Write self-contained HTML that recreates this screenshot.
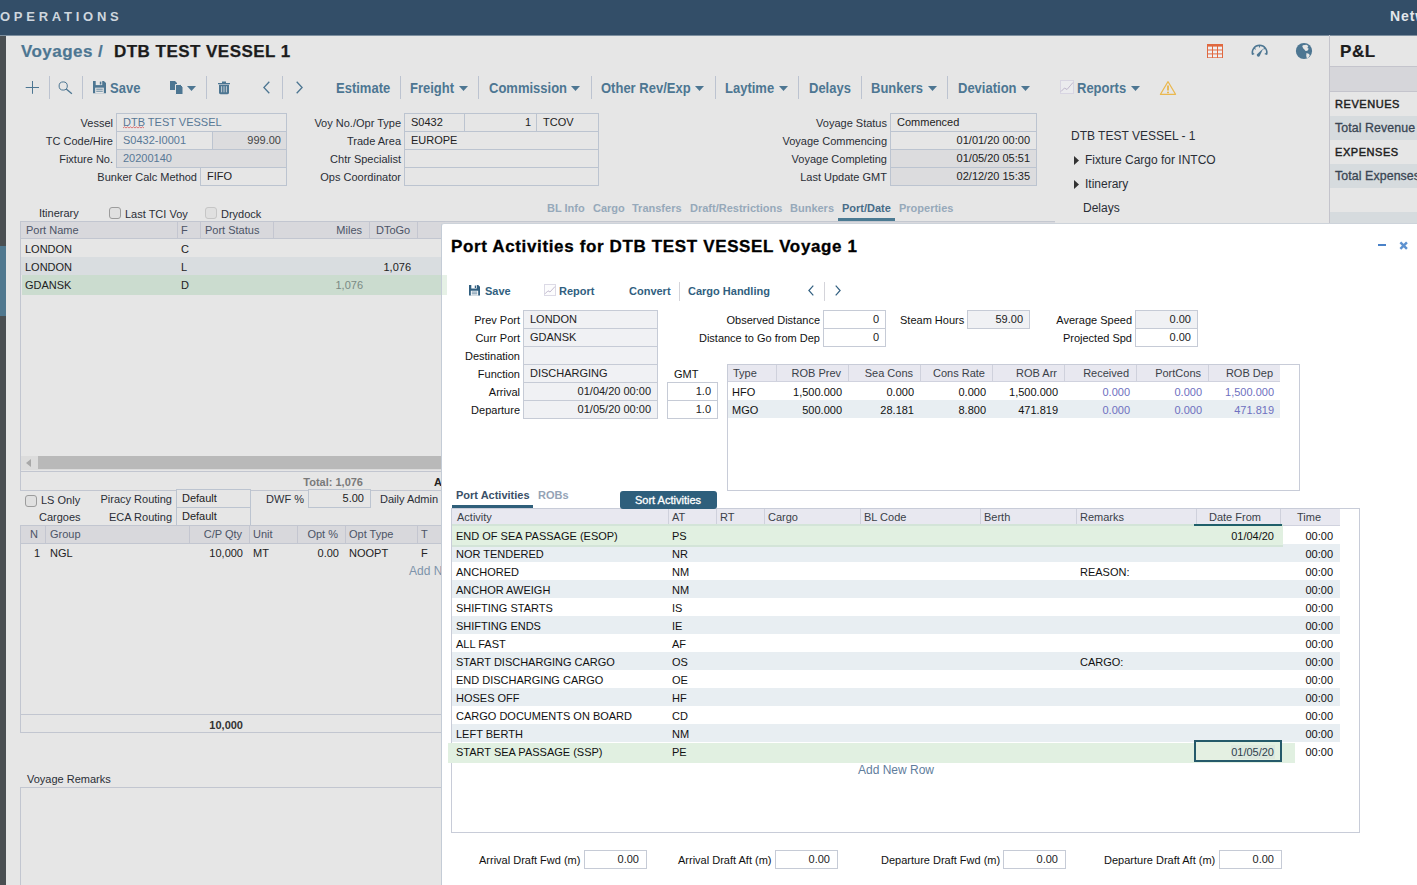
<!DOCTYPE html>
<html><head><meta charset="utf-8"><title>Operations - Voyages</title>
<style>
html,body{margin:0;padding:0;}
body{width:1417px;height:885px;overflow:hidden;position:relative;background:#e6e6e6;font-family:"Liberation Sans",Arial,sans-serif;font-size:12px;}
.a{position:absolute;box-sizing:border-box;}
.t{white-space:nowrap;}
svg{position:absolute;overflow:visible;}
</style></head><body>
<div class="a" style="left:0px;top:0px;width:1417px;height:36px;background:#334e68;"></div>
<div class="a" style="left:0px;top:35px;width:1417px;height:1px;background:#7d8f9f;"></div>
<div class="a t " style="top:9.0px;height:16px;line-height:16px;font-size:13px;color:#cfd6de;font-weight:bold;left:0px;letter-spacing:3.75px;">OPERATIONS</div>
<div class="a t " style="top:8.0px;height:16px;line-height:16px;font-size:14px;color:#e2e6ec;font-weight:bold;left:1390px;letter-spacing:0.9px;">Network</div>
<div class="a" style="left:0px;top:36px;width:6px;height:849px;background:#4a4f52;"></div>
<div class="a" style="left:0px;top:246px;width:6px;height:70px;background:#50788f;"></div>
<div class="a t " style="top:40.5px;height:22px;line-height:22px;font-size:17px;color:#4d7692;font-weight:bold;left:21px;letter-spacing:0.45px;-webkit-text-stroke:0.2px #4d7692;">Voyages /</div>
<div class="a t " style="top:40.5px;height:22px;line-height:22px;font-size:17px;color:#1c1c1c;font-weight:bold;left:114px;letter-spacing:0.47px;-webkit-text-stroke:0.25px #1c1c1c;">DTB TEST VESSEL 1</div>
<svg style="left:25px;top:81px" width="14" height="14" viewBox="0 0 14 14"><path d="M7.5 0V12.8M0.7 6.5H14" stroke="#4d7692" stroke-width="1" fill="none"/></svg>
<div class="a" style="left:49px;top:76px;width:1px;height:23px;background:#bcc3d0;"></div>
<svg style="left:58px;top:80px" width="15" height="15" viewBox="0 0 15 15"><circle cx="5.2" cy="6" r="4.1" stroke="#4d7692" stroke-width="1" fill="none"/><path d="M8.2 9L13.9 13.7" stroke="#4d7692" stroke-width="1.3"/></svg>
<div class="a" style="left:82px;top:76px;width:1px;height:23px;background:#bcc3d0;"></div>
<svg style="left:93px;top:81.2px" width="13" height="12.3" viewBox="0 0 12 12" preserveAspectRatio="none"><path d="M0 0H10L12 2V12H0Z" fill="#4d7692"/><rect x="2.5" y="0" width="6" height="4" fill="#e6e6e6"/><rect x="6.3" y="0.6" width="1.4" height="2.8" fill="#4d7692"/><rect x="2" y="6.5" width="8" height="5.5" fill="#e6e6e6"/><path d="M3 8H9M3 10H9" stroke="#4d7692" stroke-width="0.8"/></svg>
<div class="a t " style="top:80.0px;height:18px;line-height:18px;font-size:13px;color:#4d7692;font-weight:bold;left:110px;transform:scaleY(1.07);transform-origin:50% 55%;">Save</div>
<svg style="left:170px;top:81px" width="14" height="14" viewBox="0 0 14 14"><path d="M0 0H5L7 2V9H0Z" fill="#4d7692"/><path d="M5.5 3.5H10.5L13 6V13.5H5.5Z" fill="#4d7692" stroke="#e6e6e6" stroke-width="1"/></svg>
<svg style="left:187px;top:86px" width="9" height="5" viewBox="0 0 9 5"><polygon points="0,0 9,0 4.5,5" fill="#4d7692"/></svg>
<div class="a" style="left:206px;top:76px;width:1px;height:23px;background:#bcc3d0;"></div>
<svg style="left:218px;top:80.6px" width="12" height="13.2" viewBox="0 0 12 14" preserveAspectRatio="none"><path d="M0 2H12V3.4H0Z M4 0.6H8V2H4Z" fill="#4d7692"/><path d="M1 4H11V12.5Q11 14 9.5 14H2.5Q1 14 1 12.5Z" fill="#4d7692"/><path d="M3.6 5.5V12M6 5.5V12M8.4 5.5V12" stroke="#e6e6e6" stroke-width="0.8"/></svg>
<svg style="left:263px;top:81px" width="7" height="13" viewBox="0 0 7 13"><path d="M6.3 0.7L0.9 6.5L6.3 12.3" stroke="#4d7692" stroke-width="1.3" fill="none"/></svg>
<div class="a" style="left:282px;top:76px;width:1px;height:23px;background:#bcc3d0;"></div>
<svg style="left:296px;top:81px" width="7" height="13" viewBox="0 0 7 13"><path d="M0.7 0.7L6.1 6.5L0.7 12.3" stroke="#4d7692" stroke-width="1.3" fill="none"/></svg>
<div class="a t " style="top:80.0px;height:18px;line-height:18px;font-size:13px;color:#4d7692;font-weight:bold;left:336px;transform:scaleY(1.07);transform-origin:50% 55%;">Estimate</div>
<div class="a" style="left:400px;top:76px;width:1px;height:23px;background:#bcc3d0;"></div>
<div class="a t " style="top:80.0px;height:18px;line-height:18px;font-size:13px;color:#4d7692;font-weight:bold;left:410px;transform:scaleY(1.07);transform-origin:50% 55%;">Freight</div>
<svg style="left:459px;top:86px" width="9" height="5" viewBox="0 0 9 5"><polygon points="0,0 9,0 4.5,5" fill="#4d7692"/></svg>
<div class="a" style="left:478px;top:76px;width:1px;height:23px;background:#bcc3d0;"></div>
<div class="a t " style="top:80.0px;height:18px;line-height:18px;font-size:13px;color:#4d7692;font-weight:bold;left:489px;transform:scaleY(1.07);transform-origin:50% 55%;">Commission</div>
<svg style="left:571px;top:86px" width="9" height="5" viewBox="0 0 9 5"><polygon points="0,0 9,0 4.5,5" fill="#4d7692"/></svg>
<div class="a" style="left:591px;top:76px;width:1px;height:23px;background:#bcc3d0;"></div>
<div class="a t " style="top:80.0px;height:18px;line-height:18px;font-size:13px;color:#4d7692;font-weight:bold;left:601px;transform:scaleY(1.07);transform-origin:50% 55%;">Other Rev/Exp</div>
<svg style="left:695px;top:86px" width="9" height="5" viewBox="0 0 9 5"><polygon points="0,0 9,0 4.5,5" fill="#4d7692"/></svg>
<div class="a" style="left:715px;top:76px;width:1px;height:23px;background:#bcc3d0;"></div>
<div class="a t " style="top:80.0px;height:18px;line-height:18px;font-size:13px;color:#4d7692;font-weight:bold;left:725px;transform:scaleY(1.07);transform-origin:50% 55%;">Laytime</div>
<svg style="left:779px;top:86px" width="9" height="5" viewBox="0 0 9 5"><polygon points="0,0 9,0 4.5,5" fill="#4d7692"/></svg>
<div class="a" style="left:798px;top:76px;width:1px;height:23px;background:#bcc3d0;"></div>
<div class="a t " style="top:80.0px;height:18px;line-height:18px;font-size:13px;color:#4d7692;font-weight:bold;left:809px;transform:scaleY(1.07);transform-origin:50% 55%;">Delays</div>
<div class="a" style="left:861px;top:76px;width:1px;height:23px;background:#bcc3d0;"></div>
<div class="a t " style="top:80.0px;height:18px;line-height:18px;font-size:13px;color:#4d7692;font-weight:bold;left:871px;transform:scaleY(1.07);transform-origin:50% 55%;">Bunkers</div>
<svg style="left:928px;top:86px" width="9" height="5" viewBox="0 0 9 5"><polygon points="0,0 9,0 4.5,5" fill="#4d7692"/></svg>
<div class="a" style="left:947px;top:76px;width:1px;height:23px;background:#bcc3d0;"></div>
<div class="a t " style="top:80.0px;height:18px;line-height:18px;font-size:13px;color:#4d7692;font-weight:bold;left:958px;transform:scaleY(1.07);transform-origin:50% 55%;">Deviation</div>
<svg style="left:1021px;top:86px" width="9" height="5" viewBox="0 0 9 5"><polygon points="0,0 9,0 4.5,5" fill="#4d7692"/></svg>
<svg style="left:1060px;top:80px" width="14" height="14" viewBox="0 0 14 14"><rect x="0.5" y="0.5" width="13" height="13" fill="#ebebee" stroke="#d8d5e2" stroke-width="1"/><path d="M1 11.5L4.5 8L7 9.5L13 2.5" stroke="#bfb6cc" stroke-width="1" fill="none"/></svg>
<div class="a t " style="top:80.0px;height:18px;line-height:18px;font-size:13px;color:#4d7692;font-weight:bold;left:1077px;transform:scaleY(1.07);transform-origin:50% 55%;">Reports</div>
<svg style="left:1131px;top:86px" width="9" height="5" viewBox="0 0 9 5"><polygon points="0,0 9,0 4.5,5" fill="#4d7692"/></svg>
<svg style="left:1159px;top:80px" width="18" height="16" viewBox="0 0 18 16"><path d="M9 1.6L16.6 14.4H1.4Z" stroke="#eab84f" stroke-width="1.1" fill="none" stroke-linejoin="round"/><path d="M9 5.4V10.6" stroke="#e9ab2a" stroke-width="1.5"/><circle cx="9" cy="12.4" r="0.85" fill="#e9ab2a"/></svg>
<svg style="left:1207px;top:44px" width="16" height="14" viewBox="0 0 16 14"><rect x="0" y="0" width="16" height="14" fill="#e0683f"/><rect x="1" y="2.6" width="4" height="2.9" fill="#eef0f3"/><rect x="1" y="6.5" width="4" height="2.9" fill="#eef0f3"/><rect x="1" y="10.4" width="4" height="2.9" fill="#eef0f3"/><rect x="6" y="2.6" width="4" height="2.9" fill="#eef0f3"/><rect x="6" y="6.5" width="4" height="2.9" fill="#eef0f3"/><rect x="6" y="10.4" width="4" height="2.9" fill="#eef0f3"/><rect x="11" y="2.6" width="4" height="2.9" fill="#eef0f3"/><rect x="11" y="6.5" width="4" height="2.9" fill="#eef0f3"/><rect x="11" y="10.4" width="4" height="2.9" fill="#eef0f3"/></svg>
<svg style="left:1251px;top:44px" width="17" height="14" viewBox="0 0 17 14"><path d="M1.6 10.6A7.3 7.3 0 1 1 15.6 10.6" stroke="#4d7692" stroke-width="1.5" fill="none"/><path d="M1 10.2L3.2 9.6M15.9 10.2L13.8 9.6M3.2 4.2L4.6 5.4M8.5 1.5V3.4M13.8 4.2L12.6 5.4" stroke="#4d7692" stroke-width="1.1"/><path d="M12.2 4.6L8.6 12.2A1.7 1.7 0 0 1 5.8 10.6Z" fill="#4d7692"/></svg>
<svg style="left:1296px;top:43px" width="16" height="16" viewBox="0 0 16 16"><circle cx="8" cy="8" r="8.1" fill="#4d7692"/><path d="M6.8 2.2L10.5 1.7L12.3 3.1L11.4 4.9L12.8 5.8L11.4 7.7L9.6 8.1L8.6 6.8L7.3 5.4L6.3 3.6Z M10.5 10L13.2 10.9L13.7 12.7L12.3 14.6L10.9 15.5L10.2 12.7Z" fill="#e6e6e6"/></svg>
<div class="a t " style="top:115.0px;height:16px;line-height:16px;font-size:11px;color:#2a2e36;right:1304px;">Vessel</div>
<div class="a t " style="top:133.0px;height:16px;line-height:16px;font-size:11px;color:#2a2e36;right:1304px;">TC Code/Hire</div>
<div class="a t " style="top:151.0px;height:16px;line-height:16px;font-size:11px;color:#2a2e36;right:1304px;">Fixture No.</div>
<div class="a t " style="top:169.0px;height:16px;line-height:16px;font-size:11px;color:#2a2e36;right:1220px;">Bunker Calc Method</div>
<div class="a" style="left:116px;top:113px;width:171px;height:19px;background:#e7e7e7;border:1px solid #bcc4d0;"></div>
<div class="a t " style="top:113.5px;height:16px;line-height:16px;font-size:11px;color:#587896;left:123px;">DTB TEST VESSEL</div>
<svg style="left:122.5px;top:126px" width="22" height="3" viewBox="0 0 22 3"><path d="M0 2L1.5 0.8L3 2L4.5 0.8L6 2L7.5 0.8L9 2L10.5 0.8L12 2L13.5 0.8L15 2L16.5 0.8L18 2L19.5 0.8L21 2" stroke="#d85a5a" stroke-width="0.8" fill="none"/></svg>
<div class="a" style="left:116px;top:131px;width:97px;height:19px;background:#e6e6e6;border:1px solid #bcc4d0;"></div>
<div class="a t " style="top:131.5px;height:16px;line-height:16px;font-size:11px;color:#587896;left:123px;">S0432-I0001</div>
<div class="a" style="left:212px;top:131px;width:75px;height:19px;background:#dcdcde;border:1px solid #bcc4d0;"></div>
<div class="a t " style="top:131.5px;height:16px;line-height:16px;font-size:11px;color:#444;right:1136px;">999.00</div>
<div class="a" style="left:116px;top:149px;width:171px;height:19px;background:#dcdcde;border:1px solid #bcc4d0;"></div>
<div class="a t " style="top:149.5px;height:16px;line-height:16px;font-size:11px;color:#587896;left:123px;">20200140</div>
<div class="a" style="left:200px;top:167px;width:87px;height:19px;background:#e6e6e6;border:1px solid #bcc4d0;"></div>
<div class="a t " style="top:167.5px;height:16px;line-height:16px;font-size:11px;color:#222;left:207px;">FIFO</div>
<div class="a t " style="top:115.0px;height:16px;line-height:16px;font-size:11px;color:#2a2e36;right:1016px;">Voy No./Opr Type</div>
<div class="a t " style="top:133.0px;height:16px;line-height:16px;font-size:11px;color:#2a2e36;right:1016px;">Trade Area</div>
<div class="a t " style="top:151.0px;height:16px;line-height:16px;font-size:11px;color:#2a2e36;right:1016px;">Chtr Specialist</div>
<div class="a t " style="top:169.0px;height:16px;line-height:16px;font-size:11px;color:#2a2e36;right:1016px;">Ops Coordinator</div>
<div class="a" style="left:404px;top:113px;width:61px;height:19px;background:#e6e6e6;border:1px solid #bcc4d0;"></div>
<div class="a t " style="top:113.5px;height:16px;line-height:16px;font-size:11px;color:#222;left:411px;">S0432</div>
<div class="a" style="left:464px;top:113px;width:73px;height:19px;background:#e6e6e6;border:1px solid #bcc4d0;"></div>
<div class="a t " style="top:113.5px;height:16px;line-height:16px;font-size:11px;color:#222;right:886px;">1</div>
<div class="a" style="left:536px;top:113px;width:63px;height:19px;background:#e6e6e6;border:1px solid #bcc4d0;"></div>
<div class="a t " style="top:113.5px;height:16px;line-height:16px;font-size:11px;color:#222;left:543px;">TCOV</div>
<div class="a" style="left:404px;top:131px;width:195px;height:19px;background:#e6e6e6;border:1px solid #bcc4d0;"></div>
<div class="a t " style="top:131.5px;height:16px;line-height:16px;font-size:11px;color:#222;left:411px;">EUROPE</div>
<div class="a" style="left:404px;top:149px;width:195px;height:19px;background:#e6e6e6;border:1px solid #bcc4d0;"></div>
<div class="a" style="left:404px;top:167px;width:195px;height:19px;background:#e6e6e6;border:1px solid #bcc4d0;"></div>
<div class="a t " style="top:115.0px;height:16px;line-height:16px;font-size:11px;color:#2a2e36;right:530px;">Voyage Status</div>
<div class="a t " style="top:133.0px;height:16px;line-height:16px;font-size:11px;color:#2a2e36;right:530px;">Voyage Commencing</div>
<div class="a t " style="top:151.0px;height:16px;line-height:16px;font-size:11px;color:#2a2e36;right:530px;">Voyage Completing</div>
<div class="a t " style="top:169.0px;height:16px;line-height:16px;font-size:11px;color:#2a2e36;right:530px;">Last Update GMT</div>
<div class="a" style="left:890px;top:113px;width:147px;height:19px;background:#e6e6e6;border:1px solid #bcc4d0;"></div>
<div class="a t " style="top:113.5px;height:16px;line-height:16px;font-size:11px;color:#222;left:897px;">Commenced</div>
<div class="a" style="left:890px;top:131px;width:147px;height:19px;background:#e6e6e6;border:1px solid #bcc4d0;"></div>
<div class="a t " style="top:131.5px;height:16px;line-height:16px;font-size:11px;color:#222;right:387px;">01/01/20 00:00</div>
<div class="a" style="left:890px;top:149px;width:147px;height:19px;background:#dcdcde;border:1px solid #bcc4d0;"></div>
<div class="a t " style="top:149.5px;height:16px;line-height:16px;font-size:11px;color:#222;right:387px;">01/05/20 05:51</div>
<div class="a" style="left:890px;top:167px;width:147px;height:19px;background:#dcdcde;border:1px solid #bcc4d0;"></div>
<div class="a t " style="top:167.5px;height:16px;line-height:16px;font-size:11px;color:#222;right:387px;">02/12/20 15:35</div>
<div class="a t " style="top:128.0px;height:16px;line-height:16px;font-size:12px;color:#2a2e36;left:1071px;">DTB TEST VESSEL - 1</div>
<svg style="left:1074px;top:155.5px" width="5" height="9" viewBox="0 0 5 9"><polygon points="0,0 5,4.5 0,9" fill="#333"/></svg>
<div class="a t " style="top:152.0px;height:16px;line-height:16px;font-size:12px;color:#2a2e36;left:1085px;">Fixture Cargo for INTCO</div>
<svg style="left:1074px;top:179.5px" width="5" height="9" viewBox="0 0 5 9"><polygon points="0,0 5,4.5 0,9" fill="#333"/></svg>
<div class="a t " style="top:176.0px;height:16px;line-height:16px;font-size:12px;color:#2a2e36;left:1085px;">Itinerary</div>
<div class="a t " style="top:200.0px;height:16px;line-height:16px;font-size:12px;color:#2a2e36;left:1083px;">Delays</div>
<div class="a t " style="top:200.0px;height:16px;line-height:16px;font-size:11px;color:#96a9ba;font-weight:bold;left:547px;">BL Info</div>
<div class="a t " style="top:200.0px;height:16px;line-height:16px;font-size:11px;color:#96a9ba;font-weight:bold;left:593px;">Cargo</div>
<div class="a t " style="top:200.0px;height:16px;line-height:16px;font-size:11px;color:#96a9ba;font-weight:bold;left:632px;">Transfers</div>
<div class="a t " style="top:200.0px;height:16px;line-height:16px;font-size:11px;color:#96a9ba;font-weight:bold;left:690px;">Draft/Restrictions</div>
<div class="a t " style="top:200.0px;height:16px;line-height:16px;font-size:11px;color:#96a9ba;font-weight:bold;left:790px;">Bunkers</div>
<div class="a t " style="top:200.0px;height:16px;line-height:16px;font-size:11px;color:#96a9ba;font-weight:bold;left:899px;">Properties</div>
<div class="a t " style="top:200.0px;height:16px;line-height:16px;font-size:11px;color:#486c88;font-weight:bold;left:842px;">Port/Date</div>
<div class="a" style="left:838px;top:218px;width:57px;height:3px;background:#4b7a92;"></div>
<div class="a" style="left:441px;top:221px;width:614px;height:1px;background:#c4c8d0;"></div>
<div class="a" style="left:441px;top:222px;width:614px;height:2px;background:#d9d9de;"></div>
<div class="a" style="left:1329px;top:35px;width:1px;height:189px;background:#c4c4cc;"></div>
<div class="a t " style="top:41.0px;height:22px;line-height:22px;font-size:17px;color:#1c1c1c;font-weight:bold;left:1340px;letter-spacing:0.6px;-webkit-text-stroke:0.2px #1c1c1c;">P&amp;L</div>
<div class="a" style="left:1330px;top:66px;width:87px;height:26px;background:#d6d6da;border-top:1px solid #c4c4cc;border-bottom:1px solid #c4c4cc;"></div>
<div class="a t " style="top:96.0px;height:16px;line-height:16px;font-size:11px;color:#1e1e1e;left:1335px;letter-spacing:0.55px;-webkit-text-stroke:0.45px #1e1e1e;">REVENUES</div>
<div class="a" style="left:1330px;top:116px;width:87px;height:24px;background:#d6dbde;"></div>
<div class="a t " style="top:120.0px;height:16px;line-height:16px;font-size:12.35px;color:#3a4654;left:1335px;letter-spacing:0.1px;-webkit-text-stroke:0.3px #3a4654;">Total Revenue</div>
<div class="a t " style="top:144.0px;height:16px;line-height:16px;font-size:11px;color:#1e1e1e;left:1335px;letter-spacing:0.55px;-webkit-text-stroke:0.45px #1e1e1e;">EXPENSES</div>
<div class="a" style="left:1330px;top:164px;width:87px;height:24px;background:#d6dbde;"></div>
<div class="a t " style="top:168.0px;height:16px;line-height:16px;font-size:12.35px;color:#3a4654;left:1335px;letter-spacing:0.1px;-webkit-text-stroke:0.3px #3a4654;">Total Expenses</div>
<div class="a" style="left:1330px;top:212px;width:87px;height:12px;background:#d6dbde;"></div>
<div class="a t " style="top:205.0px;height:16px;line-height:16px;font-size:11px;color:#2a2e36;left:39px;">Itinerary</div>
<div class="a" style="left:109px;top:207px;width:12px;height:12px;background:#e0e0e0;border:1.2px solid #9c9c9c;border-radius:3px;"></div>
<div class="a t " style="top:206.0px;height:16px;line-height:16px;font-size:11px;color:#2a2e36;left:125px;">Last TCI Voy</div>
<div class="a" style="left:205px;top:207px;width:12px;height:12px;background:#e0e0e0;border:1.2px solid #c6c6c6;border-radius:3px;"></div>
<div class="a t " style="top:206.0px;height:16px;line-height:16px;font-size:11px;color:#2a2e36;left:221px;">Drydock</div>
<div class="a" style="left:20px;top:221px;width:425px;height:270px;border:1px solid #c2c6d0;"></div>
<div class="a" style="left:21px;top:222px;width:424px;height:17px;background:#d8d8dc;border-bottom:1px solid #c2c6d0;"></div>
<div class="a t " style="top:222.0px;height:16px;line-height:16px;font-size:11px;color:#4c5466;left:26px;">Port Name</div>
<div class="a t " style="top:222.0px;height:16px;line-height:16px;font-size:11px;color:#4c5466;left:181px;">F</div>
<div class="a t " style="top:222.0px;height:16px;line-height:16px;font-size:11px;color:#4c5466;left:205px;">Port Status</div>
<div class="a t " style="top:222.0px;height:16px;line-height:16px;font-size:11px;color:#4c5466;left:376px;">DToGo</div>
<div class="a t " style="top:222.0px;height:16px;line-height:16px;font-size:11px;color:#4c5466;right:1055px;">Miles</div>
<div class="a" style="left:177px;top:222px;width:1px;height:16px;background:#c4c6d0;"></div>
<div class="a" style="left:200px;top:222px;width:1px;height:16px;background:#c4c6d0;"></div>
<div class="a" style="left:273px;top:222px;width:1px;height:16px;background:#c4c6d0;"></div>
<div class="a" style="left:369px;top:222px;width:1px;height:16px;background:#c4c6d0;"></div>
<div class="a" style="left:417px;top:222px;width:1px;height:16px;background:#c4c6d0;"></div>
<div class="a" style="left:21px;top:257px;width:424px;height:18px;background:#d9dde0;"></div>
<div class="a" style="left:22px;top:275px;width:425px;height:20px;background:#cbdccf;"></div>
<div class="a t " style="top:241.0px;height:16px;line-height:16px;font-size:11px;color:#222;left:25px;">LONDON</div>
<div class="a t " style="top:241.0px;height:16px;line-height:16px;font-size:11px;color:#222;left:181px;">C</div>
<div class="a t " style="top:259.0px;height:16px;line-height:16px;font-size:11px;color:#222;left:25px;">LONDON</div>
<div class="a t " style="top:259.0px;height:16px;line-height:16px;font-size:11px;color:#222;left:181px;">L</div>
<div class="a t " style="top:277.0px;height:16px;line-height:16px;font-size:11px;color:#222;left:25px;">GDANSK</div>
<div class="a t " style="top:277.0px;height:16px;line-height:16px;font-size:11px;color:#222;left:181px;">D</div>
<div class="a t " style="top:259.0px;height:16px;line-height:16px;font-size:11px;color:#222;right:1006px;">1,076</div>
<div class="a t " style="top:277.0px;height:16px;line-height:16px;font-size:11px;color:#7a8a84;right:1054px;">1,076</div>
<div class="a" style="left:21px;top:456px;width:424px;height:14px;background:#dcdcdc;"></div>
<div class="a" style="left:38px;top:456px;width:407px;height:13px;background:#b9b9b9;"></div>
<svg style="left:26px;top:458.5px" width="5" height="8" viewBox="0 0 5 8"><polygon points="5,0 0,4 5,8" fill="#a8a8a8"/></svg>
<div class="a" style="left:21px;top:471px;width:424px;height:1px;background:#c2c6d0;"></div>
<div class="a t " style="top:474.0px;height:16px;line-height:16px;font-size:11px;color:#7a7a7a;font-weight:bold;right:1054px;">Total: 1,076</div>
<div class="a t " style="top:474.0px;height:16px;line-height:16px;font-size:11px;color:#222;font-weight:bold;left:434px;">A</div>
<div class="a" style="left:25px;top:494.5px;width:12px;height:12px;background:#e0e0e0;border:1.2px solid #9c9c9c;border-radius:3px;"></div>
<div class="a t " style="top:492.0px;height:16px;line-height:16px;font-size:11px;color:#2a2e36;left:41px;">LS Only</div>
<div class="a t " style="top:491.0px;height:16px;line-height:16px;font-size:11px;color:#2a2e36;right:1245px;">Piracy Routing</div>
<div class="a" style="left:176px;top:489px;width:75px;height:19px;background:#e6e6e6;border:1px solid #bcc4d0;"></div>
<div class="a t " style="top:489.5px;height:16px;line-height:16px;font-size:11px;color:#222;left:182px;">Default</div>
<div class="a t " style="top:491.0px;height:16px;line-height:16px;font-size:11px;color:#2a2e36;right:1113px;">DWF %</div>
<div class="a" style="left:308px;top:489px;width:63px;height:19px;background:#e6e6e6;border:1px solid #bcc4d0;"></div>
<div class="a t " style="top:489.5px;height:16px;line-height:16px;font-size:11px;color:#222;right:1053px;">5.00</div>
<div class="a t " style="top:491.0px;height:16px;line-height:16px;font-size:11px;color:#2a2e36;left:380px;">Daily Admin</div>
<div class="a t " style="top:509.0px;height:16px;line-height:16px;font-size:11px;color:#2a2e36;left:39px;">Cargoes</div>
<div class="a t " style="top:509.0px;height:16px;line-height:16px;font-size:11px;color:#2a2e36;right:1245px;">ECA Routing</div>
<div class="a" style="left:176px;top:507px;width:75px;height:19px;background:#e6e6e6;border:1px solid #bcc4d0;"></div>
<div class="a t " style="top:507.5px;height:16px;line-height:16px;font-size:11px;color:#222;left:182px;">Default</div>
<div class="a" style="left:20px;top:525px;width:425px;height:208px;border:1px solid #c2c6d0;"></div>
<div class="a" style="left:21px;top:526px;width:424px;height:18px;background:#d8d8dc;border-bottom:1px solid #c2c6d0;"></div>
<div class="a t " style="top:526.0px;height:16px;line-height:16px;font-size:11px;color:#4c5466;left:30px;">N</div>
<div class="a t " style="top:526.0px;height:16px;line-height:16px;font-size:11px;color:#4c5466;left:50px;">Group</div>
<div class="a t " style="top:526.0px;height:16px;line-height:16px;font-size:11px;color:#4c5466;left:253px;">Unit</div>
<div class="a t " style="top:526.0px;height:16px;line-height:16px;font-size:11px;color:#4c5466;left:349px;">Opt Type</div>
<div class="a t " style="top:526.0px;height:16px;line-height:16px;font-size:11px;color:#4c5466;left:421px;">T</div>
<div class="a t " style="top:526.0px;height:16px;line-height:16px;font-size:11px;color:#4c5466;right:1175px;">C/P Qty</div>
<div class="a t " style="top:526.0px;height:16px;line-height:16px;font-size:11px;color:#4c5466;right:1079px;">Opt %</div>
<div class="a" style="left:45px;top:526px;width:1px;height:17px;background:#c4c6d0;"></div>
<div class="a" style="left:189px;top:526px;width:1px;height:17px;background:#c4c6d0;"></div>
<div class="a" style="left:249px;top:526px;width:1px;height:17px;background:#c4c6d0;"></div>
<div class="a" style="left:297px;top:526px;width:1px;height:17px;background:#c4c6d0;"></div>
<div class="a" style="left:345px;top:526px;width:1px;height:17px;background:#c4c6d0;"></div>
<div class="a" style="left:417px;top:526px;width:1px;height:17px;background:#c4c6d0;"></div>
<div class="a t " style="top:545.0px;height:16px;line-height:16px;font-size:11px;color:#222;right:1377px;">1</div>
<div class="a t " style="top:545.0px;height:16px;line-height:16px;font-size:11px;color:#222;left:50px;">NGL</div>
<div class="a t " style="top:545.0px;height:16px;line-height:16px;font-size:11px;color:#222;right:1174px;">10,000</div>
<div class="a t " style="top:545.0px;height:16px;line-height:16px;font-size:11px;color:#222;left:253px;">MT</div>
<div class="a t " style="top:545.0px;height:16px;line-height:16px;font-size:11px;color:#222;right:1078px;">0.00</div>
<div class="a t " style="top:545.0px;height:16px;line-height:16px;font-size:11px;color:#222;left:349px;">NOOPT</div>
<div class="a t " style="top:545.0px;height:16px;line-height:16px;font-size:11px;color:#222;left:421px;">F</div>
<div class="a t " style="top:563.0px;height:16px;line-height:16px;font-size:12px;color:#7d93aa;left:409px;">Add N</div>
<div class="a" style="left:21px;top:714px;width:424px;height:1px;background:#c2c6d0;"></div>
<div class="a t " style="top:717.0px;height:16px;line-height:16px;font-size:11px;color:#333;font-weight:bold;right:1174px;">10,000</div>
<div class="a t " style="top:771.0px;height:16px;line-height:16px;font-size:11px;color:#2a2e36;left:27px;">Voyage Remarks</div>
<div class="a" style="left:20px;top:787px;width:425px;height:110px;border:1px solid #c2c6d0;"></div>
<div class="a" style="left:441px;top:223px;width:976px;height:662px;background:#ffffff;border-left:1px solid #c4ccd6;border-top:1px solid #cdd3da;border-top-left-radius:3px;"></div>
<div class="a" style="left:442px;top:275px;width:5px;height:20px;background:#e6f1e6;"></div>
<div class="a t " style="top:236.0px;height:22px;line-height:22px;font-size:17px;color:#000;font-weight:bold;left:451px;letter-spacing:0.64px;-webkit-text-stroke:0.3px #000;">Port Activities for DTB TEST VESSEL Voyage 1</div>
<div class="a" style="left:1378px;top:244px;width:8px;height:2px;background:#4a82c8;"></div>
<svg style="left:1398.8px;top:240.9px" width="9.3" height="9.1" viewBox="0 0 10 10"><path d="M1.4 1.4L8.6 8.6M8.6 1.4L1.4 8.6" stroke="#5e92d0" stroke-width="2.7"/></svg>
<svg style="left:469px;top:285.2px" width="11" height="10.6" viewBox="0 0 12 12" preserveAspectRatio="none"><path d="M0 0H10L12 2V12H0Z" fill="#315f80"/><rect x="2.5" y="0" width="6" height="4" fill="#fff"/><rect x="6.3" y="0.6" width="1.4" height="2.8" fill="#315f80"/><rect x="2" y="6.5" width="8" height="5.5" fill="#fff"/><path d="M3 8H9M3 10H9" stroke="#315f80" stroke-width="0.8"/></svg>
<div class="a t " style="top:283.0px;height:16px;line-height:16px;font-size:11px;color:#315f80;font-weight:bold;left:485px;">Save</div>
<svg style="left:544px;top:284px" width="12" height="12" viewBox="0 0 12 12"><rect x="0.5" y="0.5" width="11" height="11" fill="#fcfcfd" stroke="#dcdae6" stroke-width="1"/><path d="M1 9.8L4 6.8L6 8L11 2.5" stroke="#c4bccf" stroke-width="1" fill="none"/></svg>
<div class="a t " style="top:283.0px;height:16px;line-height:16px;font-size:11px;color:#315f80;font-weight:bold;left:559px;">Report</div>
<div class="a t " style="top:283.0px;height:16px;line-height:16px;font-size:11px;color:#315f80;font-weight:bold;left:629px;">Convert</div>
<div class="a" style="left:679px;top:282px;width:1px;height:19px;background:#d4d4da;"></div>
<div class="a t " style="top:283.0px;height:16px;line-height:16px;font-size:11px;color:#315f80;font-weight:bold;left:688px;">Cargo Handling</div>
<svg style="left:808px;top:285px" width="6" height="11" viewBox="0 0 6 11"><path d="M5.3 0.7L0.9 5.5L5.3 10.3" stroke="#315f80" stroke-width="1.2" fill="none"/></svg>
<div class="a" style="left:824px;top:282px;width:1px;height:19px;background:#d4d4da;"></div>
<svg style="left:835px;top:285px" width="6" height="11" viewBox="0 0 6 11"><path d="M0.7 0.7L5.1 5.5L0.7 10.3" stroke="#315f80" stroke-width="1.2" fill="none"/></svg>
<div class="a t " style="top:312.0px;height:16px;line-height:16px;font-size:11px;color:#111;right:897px;">Prev Port</div>
<div class="a t " style="top:330.0px;height:16px;line-height:16px;font-size:11px;color:#111;right:897px;">Curr Port</div>
<div class="a t " style="top:348.0px;height:16px;line-height:16px;font-size:11px;color:#111;right:897px;">Destination</div>
<div class="a t " style="top:366.0px;height:16px;line-height:16px;font-size:11px;color:#111;right:897px;">Function</div>
<div class="a t " style="top:384.0px;height:16px;line-height:16px;font-size:11px;color:#111;right:897px;">Arrival</div>
<div class="a t " style="top:402.0px;height:16px;line-height:16px;font-size:11px;color:#111;right:897px;">Departure</div>
<div class="a" style="left:523px;top:310px;width:135px;height:19px;background:#f0f1f4;border:1px solid #c6cbd6;"></div>
<div class="a t " style="top:310.5px;height:16px;line-height:16px;font-size:11px;color:#222;left:530px;">LONDON</div>
<div class="a" style="left:523px;top:328px;width:135px;height:19px;background:#f0f1f4;border:1px solid #c6cbd6;"></div>
<div class="a t " style="top:328.5px;height:16px;line-height:16px;font-size:11px;color:#222;left:530px;">GDANSK</div>
<div class="a" style="left:523px;top:346px;width:135px;height:19px;background:#f0f1f4;border:1px solid #c6cbd6;"></div>
<div class="a" style="left:523px;top:364px;width:135px;height:19px;background:#f0f1f4;border:1px solid #c6cbd6;"></div>
<div class="a t " style="top:364.5px;height:16px;line-height:16px;font-size:11px;color:#222;left:530px;">DISCHARGING</div>
<div class="a" style="left:523px;top:382px;width:135px;height:19px;background:#f0f1f4;border:1px solid #c6cbd6;"></div>
<div class="a t " style="top:382.5px;height:16px;line-height:16px;font-size:11px;color:#222;right:766px;">01/04/20 00:00</div>
<div class="a" style="left:523px;top:400px;width:135px;height:19px;background:#f0f1f4;border:1px solid #c6cbd6;"></div>
<div class="a t " style="top:400.5px;height:16px;line-height:16px;font-size:11px;color:#222;right:766px;">01/05/20 00:00</div>
<div class="a t " style="top:312.0px;height:16px;line-height:16px;font-size:11px;color:#111;right:597px;">Observed Distance</div>
<div class="a t " style="top:330.0px;height:16px;line-height:16px;font-size:11px;color:#111;right:597px;">Distance to Go from Dep</div>
<div class="a" style="left:823px;top:310px;width:63px;height:19px;background:#fff;border:1px solid #c6cbd6;"></div>
<div class="a t " style="top:310.5px;height:16px;line-height:16px;font-size:11px;color:#222;right:538px;">0</div>
<div class="a" style="left:823px;top:328px;width:63px;height:19px;background:#fff;border:1px solid #c6cbd6;"></div>
<div class="a t " style="top:328.5px;height:16px;line-height:16px;font-size:11px;color:#222;right:538px;">0</div>
<div class="a t " style="top:312.0px;height:16px;line-height:16px;font-size:11px;color:#111;left:900px;">Steam Hours</div>
<div class="a" style="left:967px;top:310px;width:63px;height:19px;background:#f0f1f4;border:1px solid #c6cbd6;"></div>
<div class="a t " style="top:310.5px;height:16px;line-height:16px;font-size:11px;color:#222;right:394px;">59.00</div>
<div class="a t " style="top:312.0px;height:16px;line-height:16px;font-size:11px;color:#111;right:285px;">Average Speed</div>
<div class="a t " style="top:330.0px;height:16px;line-height:16px;font-size:11px;color:#111;right:285px;">Projected Spd</div>
<div class="a" style="left:1135px;top:310px;width:63px;height:19px;background:#f0f1f4;border:1px solid #c6cbd6;"></div>
<div class="a t " style="top:310.5px;height:16px;line-height:16px;font-size:11px;color:#222;right:226px;">0.00</div>
<div class="a" style="left:1135px;top:328px;width:63px;height:19px;background:#fff;border:1px solid #c6cbd6;"></div>
<div class="a t " style="top:328.5px;height:16px;line-height:16px;font-size:11px;color:#222;right:226px;">0.00</div>
<div class="a t " style="top:366.0px;height:16px;line-height:16px;font-size:11px;color:#111;left:674px;">GMT</div>
<div class="a" style="left:667px;top:382px;width:51px;height:19px;background:#fff;border:1px solid #c6cbd6;"></div>
<div class="a t " style="top:382.5px;height:16px;line-height:16px;font-size:11px;color:#222;right:706px;">1.0</div>
<div class="a" style="left:667px;top:400px;width:51px;height:19px;background:#fff;border:1px solid #c6cbd6;"></div>
<div class="a t " style="top:400.5px;height:16px;line-height:16px;font-size:11px;color:#222;right:706px;">1.0</div>
<div class="a" style="left:727px;top:364px;width:573px;height:127px;background:#fff;border:1px solid #c8ccd8;"></div>
<div class="a" style="left:728px;top:365px;width:552px;height:17px;background:#e8e8f0;border-bottom:1px solid #d0d2de;"></div>
<div class="a t " style="top:365.0px;height:16px;line-height:16px;font-size:11px;color:#3a3f48;left:733px;">Type</div>
<div class="a t " style="top:365.0px;height:16px;line-height:16px;font-size:11px;color:#3a3f48;right:576px;">ROB Prev</div>
<div class="a t " style="top:365.0px;height:16px;line-height:16px;font-size:11px;color:#3a3f48;right:504px;">Sea Cons</div>
<div class="a t " style="top:365.0px;height:16px;line-height:16px;font-size:11px;color:#3a3f48;right:432px;">Cons Rate</div>
<div class="a t " style="top:365.0px;height:16px;line-height:16px;font-size:11px;color:#3a3f48;right:360px;">ROB Arr</div>
<div class="a t " style="top:365.0px;height:16px;line-height:16px;font-size:11px;color:#3a3f48;right:288px;">Received</div>
<div class="a t " style="top:365.0px;height:16px;line-height:16px;font-size:11px;color:#3a3f48;right:216px;">PortCons</div>
<div class="a t " style="top:365.0px;height:16px;line-height:16px;font-size:11px;color:#3a3f48;right:144px;">ROB Dep</div>
<div class="a" style="left:776px;top:365px;width:1px;height:16px;background:#cfd1dc;"></div>
<div class="a" style="left:848px;top:365px;width:1px;height:16px;background:#cfd1dc;"></div>
<div class="a" style="left:920px;top:365px;width:1px;height:16px;background:#cfd1dc;"></div>
<div class="a" style="left:992px;top:365px;width:1px;height:16px;background:#cfd1dc;"></div>
<div class="a" style="left:1064px;top:365px;width:1px;height:16px;background:#cfd1dc;"></div>
<div class="a" style="left:1136px;top:365px;width:1px;height:16px;background:#cfd1dc;"></div>
<div class="a" style="left:1208px;top:365px;width:1px;height:16px;background:#cfd1dc;"></div>
<div class="a" style="left:728px;top:400px;width:552px;height:18px;background:#e8eef2;"></div>
<div class="a t " style="top:384.0px;height:16px;line-height:16px;font-size:11px;color:#111;left:732px;">HFO</div>
<div class="a t " style="top:402.0px;height:16px;line-height:16px;font-size:11px;color:#111;left:732px;">MGO</div>
<div class="a t " style="top:384.0px;height:16px;line-height:16px;font-size:11px;color:#111;right:575px;">1,500.000</div>
<div class="a t " style="top:402.0px;height:16px;line-height:16px;font-size:11px;color:#111;right:575px;">500.000</div>
<div class="a t " style="top:384.0px;height:16px;line-height:16px;font-size:11px;color:#111;right:503px;">0.000</div>
<div class="a t " style="top:402.0px;height:16px;line-height:16px;font-size:11px;color:#111;right:503px;">28.181</div>
<div class="a t " style="top:384.0px;height:16px;line-height:16px;font-size:11px;color:#111;right:431px;">0.000</div>
<div class="a t " style="top:402.0px;height:16px;line-height:16px;font-size:11px;color:#111;right:431px;">8.800</div>
<div class="a t " style="top:384.0px;height:16px;line-height:16px;font-size:11px;color:#111;right:359px;">1,500.000</div>
<div class="a t " style="top:402.0px;height:16px;line-height:16px;font-size:11px;color:#111;right:359px;">471.819</div>
<div class="a t " style="top:384.0px;height:16px;line-height:16px;font-size:11px;color:#6e70c0;right:287px;">0.000</div>
<div class="a t " style="top:402.0px;height:16px;line-height:16px;font-size:11px;color:#6e70c0;right:287px;">0.000</div>
<div class="a t " style="top:384.0px;height:16px;line-height:16px;font-size:11px;color:#6e70c0;right:215px;">0.000</div>
<div class="a t " style="top:402.0px;height:16px;line-height:16px;font-size:11px;color:#6e70c0;right:215px;">0.000</div>
<div class="a t " style="top:384.0px;height:16px;line-height:16px;font-size:11px;color:#6e70c0;right:143px;">1,500.000</div>
<div class="a t " style="top:402.0px;height:16px;line-height:16px;font-size:11px;color:#6e70c0;right:143px;">471.819</div>
<div class="a t " style="top:487.0px;height:16px;line-height:16px;font-size:11px;color:#3a5068;font-weight:bold;left:456px;">Port Activities</div>
<div class="a" style="left:452px;top:505px;width:81px;height:3px;background:#2f5f7a;"></div>
<div class="a t " style="top:487.0px;height:16px;line-height:16px;font-size:11px;color:#94a3b6;font-weight:bold;left:538px;">ROBs</div>
<div class="a" style="left:451px;top:508px;width:909px;height:325px;background:#fff;border:1px solid #c8ccd8;"></div>
<div class="a" style="left:452px;top:509px;width:888px;height:17px;background:#e8e8f0;border-bottom:1px solid #d0d2de;"></div>
<div class="a" style="left:620px;top:491px;width:97px;height:18px;background:#2e5f7c;border-radius:3px;"></div>
<div class="a t " style="top:492.0px;height:16px;line-height:16px;font-size:11px;color:#fff;left:635px;-webkit-text-stroke:0.3px #fff;">Sort Activities</div>
<div class="a t " style="top:509.0px;height:16px;line-height:16px;font-size:11px;color:#3a3f48;left:457px;">Activity</div>
<div class="a t " style="top:509.0px;height:16px;line-height:16px;font-size:11px;color:#3a3f48;left:672px;">AT</div>
<div class="a t " style="top:509.0px;height:16px;line-height:16px;font-size:11px;color:#3a3f48;left:720px;">RT</div>
<div class="a t " style="top:509.0px;height:16px;line-height:16px;font-size:11px;color:#3a3f48;left:768px;">Cargo</div>
<div class="a t " style="top:509.0px;height:16px;line-height:16px;font-size:11px;color:#3a3f48;left:864px;">BL Code</div>
<div class="a t " style="top:509.0px;height:16px;line-height:16px;font-size:11px;color:#3a3f48;left:984px;">Berth</div>
<div class="a t " style="top:509.0px;height:16px;line-height:16px;font-size:11px;color:#3a3f48;left:1080px;">Remarks</div>
<div class="a t " style="top:509.0px;height:16px;line-height:16px;font-size:11px;color:#3a3f48;left:1209px;">Date From</div>
<div class="a t " style="top:509.0px;height:16px;line-height:16px;font-size:11px;color:#3a3f48;left:1297px;">Time</div>
<div class="a" style="left:668px;top:509px;width:1px;height:16px;background:#cfd1dc;"></div>
<div class="a" style="left:716px;top:509px;width:1px;height:16px;background:#cfd1dc;"></div>
<div class="a" style="left:764px;top:509px;width:1px;height:16px;background:#cfd1dc;"></div>
<div class="a" style="left:860px;top:509px;width:1px;height:16px;background:#cfd1dc;"></div>
<div class="a" style="left:980px;top:509px;width:1px;height:16px;background:#cfd1dc;"></div>
<div class="a" style="left:1076px;top:509px;width:1px;height:16px;background:#cfd1dc;"></div>
<div class="a" style="left:1196px;top:509px;width:1px;height:16px;background:#cfd1dc;"></div>
<div class="a" style="left:1280px;top:509px;width:1px;height:16px;background:#cfd1dc;"></div>
<div class="a" style="left:452px;top:544px;width:888px;height:18px;background:#e8eef2;"></div>
<div class="a" style="left:452px;top:580px;width:888px;height:18px;background:#e8eef2;"></div>
<div class="a" style="left:452px;top:616px;width:888px;height:18px;background:#e8eef2;"></div>
<div class="a" style="left:452px;top:652px;width:888px;height:18px;background:#e8eef2;"></div>
<div class="a" style="left:452px;top:688px;width:888px;height:18px;background:#e8eef2;"></div>
<div class="a" style="left:452px;top:724px;width:888px;height:18px;background:#e8eef2;"></div>
<div class="a" style="left:452px;top:524px;width:831px;height:23px;background:#d3e4d8;"></div>
<div class="a" style="left:452px;top:526px;width:831px;height:19px;background:#e1f0e1;"></div>
<div class="a" style="left:448px;top:743px;width:847px;height:20px;background:#e1f0e1;"></div>
<div class="a" style="left:1194px;top:524px;width:88px;height:2px;background:#1f5f6a;"></div>
<div class="a" style="left:1194px;top:740px;width:88px;height:22px;background:#e4f0e2;border:2px solid #255a6a;"></div>
<div class="a" style="left:1231px;top:745px;width:44px;height:14px;background:#dde8de;"></div>
<div class="a t " style="top:528.0px;height:16px;line-height:16px;font-size:11px;color:#111;left:456px;">END OF SEA PASSAGE (ESOP)</div>
<div class="a t " style="top:528.0px;height:16px;line-height:16px;font-size:11px;color:#111;left:672px;">PS</div>
<div class="a t " style="top:528.0px;height:16px;line-height:16px;font-size:11px;color:#111;right:84px;">00:00</div>
<div class="a t " style="top:546.0px;height:16px;line-height:16px;font-size:11px;color:#111;left:456px;">NOR TENDERED</div>
<div class="a t " style="top:546.0px;height:16px;line-height:16px;font-size:11px;color:#111;left:672px;">NR</div>
<div class="a t " style="top:546.0px;height:16px;line-height:16px;font-size:11px;color:#111;right:84px;">00:00</div>
<div class="a t " style="top:564.0px;height:16px;line-height:16px;font-size:11px;color:#111;left:456px;">ANCHORED</div>
<div class="a t " style="top:564.0px;height:16px;line-height:16px;font-size:11px;color:#111;left:672px;">NM</div>
<div class="a t " style="top:564.0px;height:16px;line-height:16px;font-size:11px;color:#111;right:84px;">00:00</div>
<div class="a t " style="top:582.0px;height:16px;line-height:16px;font-size:11px;color:#111;left:456px;">ANCHOR AWEIGH</div>
<div class="a t " style="top:582.0px;height:16px;line-height:16px;font-size:11px;color:#111;left:672px;">NM</div>
<div class="a t " style="top:582.0px;height:16px;line-height:16px;font-size:11px;color:#111;right:84px;">00:00</div>
<div class="a t " style="top:600.0px;height:16px;line-height:16px;font-size:11px;color:#111;left:456px;">SHIFTING STARTS</div>
<div class="a t " style="top:600.0px;height:16px;line-height:16px;font-size:11px;color:#111;left:672px;">IS</div>
<div class="a t " style="top:600.0px;height:16px;line-height:16px;font-size:11px;color:#111;right:84px;">00:00</div>
<div class="a t " style="top:618.0px;height:16px;line-height:16px;font-size:11px;color:#111;left:456px;">SHIFTING ENDS</div>
<div class="a t " style="top:618.0px;height:16px;line-height:16px;font-size:11px;color:#111;left:672px;">IE</div>
<div class="a t " style="top:618.0px;height:16px;line-height:16px;font-size:11px;color:#111;right:84px;">00:00</div>
<div class="a t " style="top:636.0px;height:16px;line-height:16px;font-size:11px;color:#111;left:456px;">ALL FAST</div>
<div class="a t " style="top:636.0px;height:16px;line-height:16px;font-size:11px;color:#111;left:672px;">AF</div>
<div class="a t " style="top:636.0px;height:16px;line-height:16px;font-size:11px;color:#111;right:84px;">00:00</div>
<div class="a t " style="top:654.0px;height:16px;line-height:16px;font-size:11px;color:#111;left:456px;">START DISCHARGING CARGO</div>
<div class="a t " style="top:654.0px;height:16px;line-height:16px;font-size:11px;color:#111;left:672px;">OS</div>
<div class="a t " style="top:654.0px;height:16px;line-height:16px;font-size:11px;color:#111;right:84px;">00:00</div>
<div class="a t " style="top:672.0px;height:16px;line-height:16px;font-size:11px;color:#111;left:456px;">END DISCHARGING CARGO</div>
<div class="a t " style="top:672.0px;height:16px;line-height:16px;font-size:11px;color:#111;left:672px;">OE</div>
<div class="a t " style="top:672.0px;height:16px;line-height:16px;font-size:11px;color:#111;right:84px;">00:00</div>
<div class="a t " style="top:690.0px;height:16px;line-height:16px;font-size:11px;color:#111;left:456px;">HOSES OFF</div>
<div class="a t " style="top:690.0px;height:16px;line-height:16px;font-size:11px;color:#111;left:672px;">HF</div>
<div class="a t " style="top:690.0px;height:16px;line-height:16px;font-size:11px;color:#111;right:84px;">00:00</div>
<div class="a t " style="top:708.0px;height:16px;line-height:16px;font-size:11px;color:#111;left:456px;">CARGO DOCUMENTS ON BOARD</div>
<div class="a t " style="top:708.0px;height:16px;line-height:16px;font-size:11px;color:#111;left:672px;">CD</div>
<div class="a t " style="top:708.0px;height:16px;line-height:16px;font-size:11px;color:#111;right:84px;">00:00</div>
<div class="a t " style="top:726.0px;height:16px;line-height:16px;font-size:11px;color:#111;left:456px;">LEFT BERTH</div>
<div class="a t " style="top:726.0px;height:16px;line-height:16px;font-size:11px;color:#111;left:672px;">NM</div>
<div class="a t " style="top:726.0px;height:16px;line-height:16px;font-size:11px;color:#111;right:84px;">00:00</div>
<div class="a t " style="top:744.0px;height:16px;line-height:16px;font-size:11px;color:#111;left:456px;">START SEA PASSAGE (SSP)</div>
<div class="a t " style="top:744.0px;height:16px;line-height:16px;font-size:11px;color:#111;left:672px;">PE</div>
<div class="a t " style="top:744.0px;height:16px;line-height:16px;font-size:11px;color:#111;right:84px;">00:00</div>
<div class="a t " style="top:564.0px;height:16px;line-height:16px;font-size:11px;color:#111;left:1080px;">REASON:</div>
<div class="a t " style="top:654.0px;height:16px;line-height:16px;font-size:11px;color:#111;left:1080px;">CARGO:</div>
<div class="a t " style="top:528.0px;height:16px;line-height:16px;font-size:11px;color:#111;right:143px;">01/04/20</div>
<div class="a t " style="top:744.0px;height:16px;line-height:16px;font-size:11px;color:#2e3e4c;right:143px;">01/05/20</div>
<div class="a t " style="top:762.0px;height:16px;line-height:16px;font-size:12px;color:#5f7d9c;left:858px;">Add New Row</div>
<div class="a t " style="top:852.0px;height:16px;line-height:16px;font-size:11px;color:#111;left:479px;">Arrival Draft Fwd (m)</div>
<div class="a" style="left:584px;top:850px;width:63px;height:19px;background:#fff;border:1px solid #c6cbd6;"></div>
<div class="a t " style="top:850.5px;height:16px;line-height:16px;font-size:11px;color:#222;right:778px;">0.00</div>
<div class="a t " style="top:852.0px;height:16px;line-height:16px;font-size:11px;color:#111;left:678px;">Arrival Draft Aft (m)</div>
<div class="a" style="left:775px;top:850px;width:63px;height:19px;background:#fff;border:1px solid #c6cbd6;"></div>
<div class="a t " style="top:850.5px;height:16px;line-height:16px;font-size:11px;color:#222;right:587px;">0.00</div>
<div class="a t " style="top:852.0px;height:16px;line-height:16px;font-size:11px;color:#111;left:881px;">Departure Draft Fwd (m)</div>
<div class="a" style="left:1003px;top:850px;width:63px;height:19px;background:#fff;border:1px solid #c6cbd6;"></div>
<div class="a t " style="top:850.5px;height:16px;line-height:16px;font-size:11px;color:#222;right:359px;">0.00</div>
<div class="a t " style="top:852.0px;height:16px;line-height:16px;font-size:11px;color:#111;left:1104px;">Departure Draft Aft (m)</div>
<div class="a" style="left:1219px;top:850px;width:63px;height:19px;background:#fff;border:1px solid #c6cbd6;"></div>
<div class="a t " style="top:850.5px;height:16px;line-height:16px;font-size:11px;color:#222;right:143px;">0.00</div>
</body></html>
